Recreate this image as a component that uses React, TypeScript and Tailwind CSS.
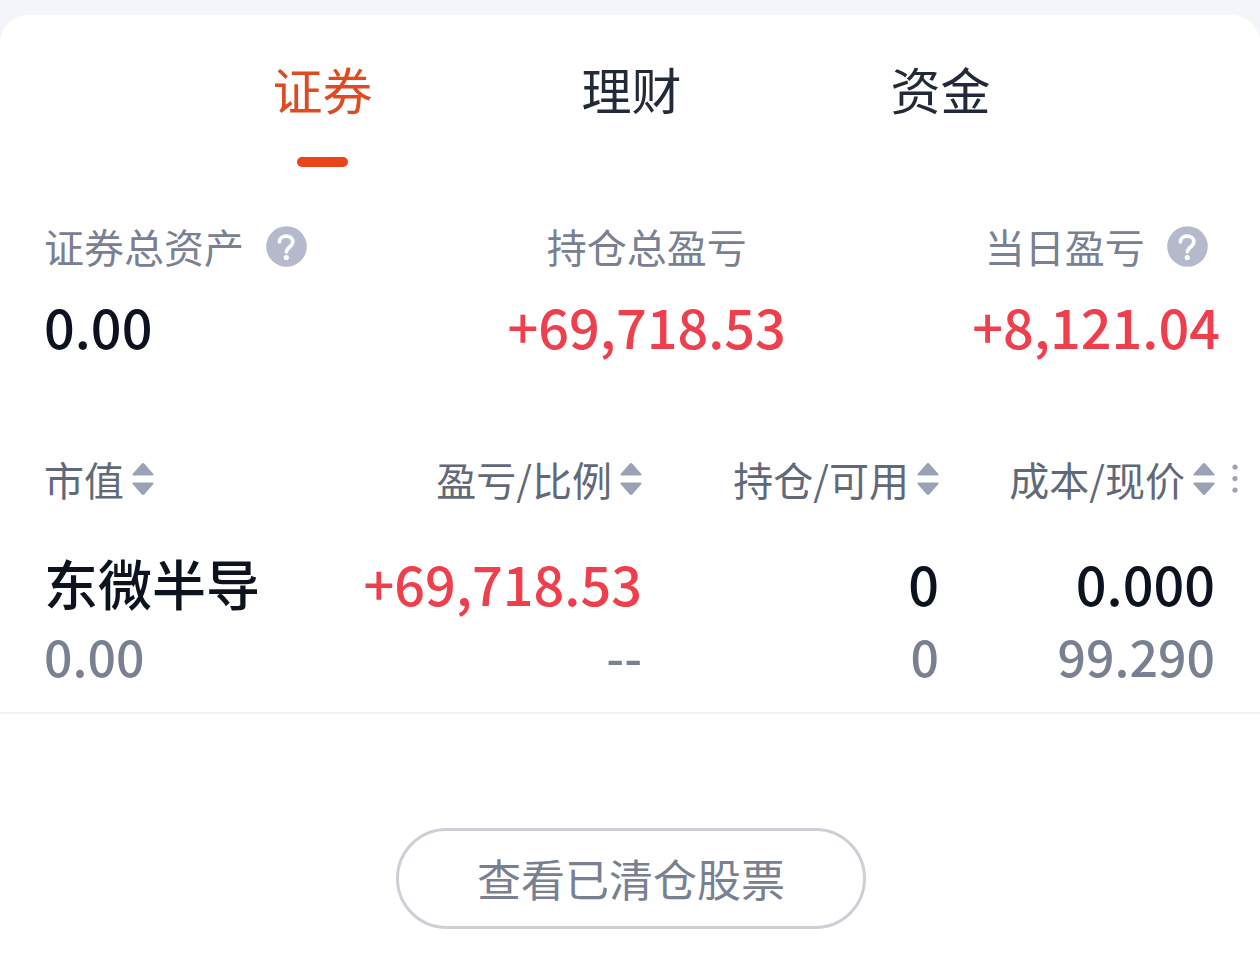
import { useState } from "react";
import clsx from "clsx";

const tabs = ["证券", "理财", "资金"];

const columns = ["市值", "盈亏/比例", "持仓/可用", "成本/现价"];

const holdings = [
  {
    name: "东微半导",
    marketValue: "0.00",
    profit: "+69,718.53",
    ratio: "--",
    position: "0",
    available: "0",
    cost: "0.000",
    price: "99.290",
  },
];

function HelpIcon() {
  return (
    <svg viewBox="0 0 41 41" className="size-[41px]" fill="none" aria-hidden="true">
      <circle cx="20.5" cy="20.5" r="20.3" fill="#b4b9cc" />
      <path
        d="M13.4 15.9c0-3.6 3-5.8 6.8-5.8s6.6 2.2 6.6 5.6c0 2.3-1.2 3.6-3.1 5.2-2.1 1.7-3.3 2.7-3.3 5.1"
        stroke="#fff"
        strokeWidth="3.6"
        strokeLinecap="round"
      />
      <circle cx="20.3" cy="31.6" r="2.6" fill="#fff" />
    </svg>
  );
}

function SortIcon() {
  return (
    <svg viewBox="0 0 22 32" className="h-8 w-[22px]" fill="#9ba2b5" aria-hidden="true">
      <path d="M9.6.8a2 2 0 0 1 2.8 0l8.8 10c.7.8.4 1.6-.6 1.6H1.4c-1 0-1.3-.8-.6-1.6z" />
      <path d="M9.6 31.2a2 2 0 0 0 2.8 0l8.8-10c.7-.8.4-1.6-.6-1.6H1.4c-1 0-1.3.8-.6 1.6z" />
    </svg>
  );
}

function MoreIcon() {
  return (
    <svg viewBox="0 0 6 30" className="h-[30px] w-1.5" fill="#9ba2b5" aria-hidden="true">
      <circle cx="3" cy="3" r="2.6" />
      <circle cx="3" cy="14.5" r="2.6" />
      <circle cx="3" cy="26" r="2.6" />
    </svg>
  );
}

interface StatProps {
  label: string;
  value: string;
  help?: boolean;
  className?: string;
  valueClassName?: string;
}

function Stat({ label, value, help, className, valueClassName }: StatProps) {
  return (
    <div className={clsx("flex flex-col gap-6", className)}>
      <div className="flex items-center gap-[22px] text-[40px] leading-[48px] text-[#788092]">
        <span>{label}</span>
        {help && (
          <button type="button" aria-label={`${label}说明`}>
            <HelpIcon />
          </button>
        )}
      </div>
      <div className={clsx("text-[54px] leading-[64px] font-medium", valueClassName)}>
        {value}
      </div>
    </div>
  );
}

export default function App() {
  const [active, setActive] = useState("证券");

  return (
    <div className="min-h-screen flex flex-col bg-[#f4f5fa] pt-[15px] font-['Noto_Sans_CJK_SC',sans-serif] text-[#0c121e]">
      <main className="flex-1 rounded-t-[28px] bg-white pt-[43px] pb-7">
        <nav className="grid grid-cols-3 pl-[168px] pr-[165px]">
          {tabs.map((tab) => (
            <button
              key={tab}
              type="button"
              onClick={() => setActive(tab)}
              className={clsx(
                "flex flex-col items-center gap-[39px] text-[50px] leading-[60px]",
                tab === active ? "text-[#df4a22]" : "text-[#222939]",
              )}
            >
              {tab}
              <span
                className={clsx(
                  "h-2.5 w-[51px] rounded-full",
                  tab === active && "bg-[#eb431a]",
                )}
              />
            </button>
          ))}
        </nav>

        <section className="mt-[55px] flex justify-between pl-11 pr-10">
          <Stat label="证券总资产" value="0.00" help className="pr-3.5" />
          <Stat
            label="持仓总盈亏"
            value="+69,718.53"
            className="items-center"
            valueClassName="text-[#ef3e4c]"
          />
          <Stat
            label="当日盈亏"
            value="+8,121.04"
            help
            className="items-center"
            valueClassName="text-[#ef3e4c]"
          />
        </section>

        <table className="mt-[97px] w-full table-fixed text-right">
          <colgroup>
            <col className="w-[300px]" />
            <col />
            <col className="w-[297px]" />
            <col className="w-[276px]" />
            <col className="w-[45px]" />
          </colgroup>
          <thead>
            <tr className="text-[40px] leading-[48px] text-[#616978]">
              {columns.map((column) => (
                <th key={column} className="p-0 font-normal first:pl-11 first:text-left">
                  <button type="button" className="inline-flex items-center gap-2 align-top whitespace-nowrap">
                    {column}
                    <SortIcon />
                  </button>
                </th>
              ))}
              <th className="p-0">
                <button type="button" aria-label="更多" className="flex h-12 w-full items-center justify-center pr-1.5">
                  <MoreIcon />
                </button>
              </th>
            </tr>
          </thead>
          <tbody>
            {holdings.map((item) => (
              <tr key={item.name} className="border-b-2 border-[#f0f1f3] text-[54px] leading-[64px] font-medium">
                <td className="pt-12 pb-[25px] pl-11 text-left">
                  <div className="whitespace-nowrap">{item.name}</div>
                  <div className="mt-2 text-[50px] leading-[64px] text-[#788092]">{item.marketValue}</div>
                </td>
                <td className="pt-12 pb-[25px]">
                  <div className="text-[#ef3e4c]">{item.profit}</div>
                  <div className="mt-2 text-[50px] leading-[64px] text-[#788092]">{item.ratio}</div>
                </td>
                <td className="pt-12 pb-[25px]">
                  <div>{item.position}</div>
                  <div className="mt-2 text-[50px] leading-[64px] text-[#788092]">{item.available}</div>
                </td>
                <td className="pt-12 pb-[25px]">
                  <div>{item.cost}</div>
                  <div className="mt-2 text-[50px] leading-[64px] text-[#788092]">{item.price}</div>
                </td>
                <td />
              </tr>
            ))}
          </tbody>
        </table>

        <div className="mt-[114px] flex justify-center pl-0.5">
          <button
            type="button"
            className="rounded-full border-[3px] border-[#cccfd5] px-[78px] py-5 text-[44px] leading-[55px] text-[#788092]"
          >
            查看已清仓股票
          </button>
        </div>
      </main>
    </div>
  );
}
